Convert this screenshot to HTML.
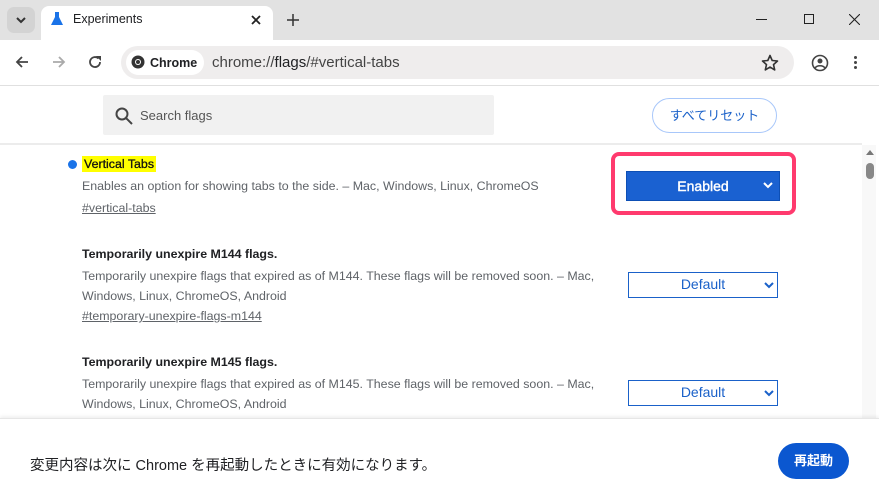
<!DOCTYPE html>
<html><head><meta charset="utf-8"><style>
*{margin:0;padding:0;box-sizing:border-box}
body{width:879px;height:504px;overflow:hidden;background:#fff;font-family:"Liberation Sans","Noto Sans CJK JP",sans-serif;position:relative;color:#202124}
.abs{position:absolute}
.strip{left:0;top:0;width:879px;height:40px;background:#e2e2e2}
.tab{left:41px;top:6px;width:232px;height:34px;background:#fff;border-radius:8px 8px 0 0}
.tb{left:0;top:40px;width:879px;height:46px;background:#fff;border-bottom:1px solid #e0e0e0}
.omni{left:121px;top:46px;width:673px;height:33px;background:#efeded;border-radius:17px}
.chip{left:126px;top:50px;width:78px;height:25px;background:#fff;border-radius:13px}
.search{left:103px;top:95px;width:391px;height:40px;background:#f1f1f1;border-radius:2px}
.sep{left:0;top:143px;width:862px;height:2px;background:#ececec}
.t{font-size:12.4px;color:#5f6368}
.h{font-size:12.4px;font-weight:bold;color:#202124}
.lnk{font-size:12.4px;color:#5f6368;text-decoration:underline}
.sel{border:1.5px solid #1a61c9;color:#1a61c9;font-size:14px;text-align:center;background:#fff}
.foot{left:0;top:418px;width:879px;height:86px;background:#fff;border-top:1px solid #e6e6e6;box-shadow:0 -2px 3px rgba(0,0,0,.06)}
</style></head><body>
<div class="abs strip"></div>
<div class="abs" style="left:7px;top:7px;width:28px;height:26px;background:#d3d3d3;border-radius:7px"></div>
<svg class="abs" style="left:15px;top:15px" width="12" height="10"><path d="M2 3l4 4 4-4" stroke="#333" stroke-width="2" fill="none"/></svg>
<div class="abs tab"></div>
<svg class="abs" style="left:50px;top:11px" width="14" height="16"><path d="M4 1h6M5 1v5L1 14h12L9 6V1" fill="#1a73e8"/></svg>
<div class="abs" style="left:73px;top:12px;font-size:12.5px">Experiments</div>
<svg class="abs" style="left:251px;top:15px" width="10" height="10"><path d="M1 1l8 8M9 1l-8 8" stroke="#222" stroke-width="1.8"/></svg>
<svg class="abs" style="left:287px;top:14px" width="12" height="12"><path d="M6 0v12M0 6h12" stroke="#333" stroke-width="1.5"/></svg>
<div class="abs" style="left:756px;top:19px;width:11px;height:1px;background:#222"></div>
<div class="abs" style="left:804px;top:14px;width:10px;height:10px;border:1px solid #222"></div>
<svg class="abs" style="left:849px;top:14px" width="11" height="11"><path d="M0 0l11 11M11 0L0 11" stroke="#222" stroke-width="1.1"/></svg>
<div class="abs tb"></div>
<svg class="abs" style="left:15px;top:55px" width="14" height="14"><path d="M13 7H2M7 2L2 7l5 5" stroke="#444" stroke-width="1.8" fill="none"/></svg>
<svg class="abs" style="left:52px;top:55px" width="14" height="14"><path d="M1 7h11M7 2l5 5-5 5" stroke="#aaa" stroke-width="1.8" fill="none"/></svg>
<svg class="abs" style="left:88px;top:55px" width="14" height="14"><path d="M12 7A5 5 0 1 1 10.5 3.5" stroke="#444" stroke-width="1.8" fill="none"/><path d="M8 1h5v5z" fill="#444"/></svg>
<div class="abs omni"></div>
<div class="abs chip"></div>
<svg class="abs" style="left:131px;top:55px" width="14" height="14"><circle cx="7" cy="7" r="6.5" fill="#333"/><circle cx="7" cy="7" r="3" fill="#fff"/><circle cx="7" cy="7" r="2" fill="#333"/></svg>
<div class="abs" style="left:150px;top:56px;font-size:12.5px;font-weight:bold">Chrome</div>
<div class="abs" style="left:212px;top:54px;font-size:15px;color:#444">chrome://<span style="color:#202124">flags</span>/#vertical-tabs</div>
<svg class="abs" style="left:761px;top:54px" width="18" height="18"><path d="M9 1.5l2.2 5 5.3.5-4 3.6 1.2 5.3L9 13.1 4.3 15.9l1.2-5.3-4-3.6 5.3-.5z" stroke="#333" stroke-width="1.6" fill="none" stroke-linejoin="round"/></svg>
<svg class="abs" style="left:811px;top:54px" width="18" height="18"><circle cx="9" cy="9" r="7.5" stroke="#444" stroke-width="1.6" fill="none"/><circle cx="9" cy="7" r="2.5" fill="#444"/><path d="M4 14c2-3 8-3 10 0" stroke="#444" stroke-width="1.6" fill="none"/></svg>
<div class="abs" style="left:854px;top:56px;width:3px;height:3px;background:#444;border-radius:50%;box-shadow:0 5px #444,0 10px #444"></div>
<div class="abs search"></div>
<svg class="abs" style="left:114px;top:106px" width="20" height="20"><circle cx="8" cy="8" r="5.5" stroke="#444" stroke-width="2" fill="none"/><path d="M12 12l6 6" stroke="#444" stroke-width="2"/></svg>
<div class="abs" style="left:140px;top:108px;font-size:13px;color:#555">Search flags</div>
<div class="abs" style="left:652px;top:98px;width:125px;height:35px;border:1px solid #a8c7fa;border-radius:18px;color:#1a61c9;font-size:13px;text-align:center;line-height:33px">すべてリセット</div>
<div class="abs sep"></div>
<div class="abs" style="left:862px;top:145px;width:14px;height:273px;background:#f8f8f8"></div>
<div class="abs" style="left:866px;top:150px;width:0;height:0;border-left:4px solid transparent;border-right:4px solid transparent;border-bottom:5px solid #777"></div>
<div class="abs" style="left:866px;top:163px;width:8px;height:16px;background:#888;border-radius:4px"></div>
<div class="abs" style="left:68px;top:160px;width:9px;height:9px;background:#1a73e8;border-radius:50%"></div>
<div class="abs h" style="left:82px;top:156px;background:#ffff00;padding:1px 2px 1px 2px;font-weight:normal;color:#111;-webkit-text-stroke:.3px #111">Vertical Tabs</div>
<div class="abs t" style="left:82px;top:179px">Enables an option for showing tabs to the side. – Mac, Windows, Linux, ChromeOS</div>
<div class="abs lnk" style="left:82px;top:201px">#vertical-tabs</div>
<div class="abs" style="left:611px;top:152px;width:185px;height:63px;border:4px solid #ff3a6e;border-radius:8px"></div>
<div class="abs" style="left:626px;top:171px;width:154px;height:30px;background:#1a61d1;border:1px solid #0d4fb5;color:#fff;font-size:14px;text-align:center;line-height:28px;-webkit-text-stroke:.4px #fff">Enabled</div>
<svg class="abs" style="left:763px;top:182px" width="10" height="7"><path d="M1 1l4 4 4-4" stroke="#fff" stroke-width="2" fill="none"/></svg>
<div class="abs h" style="left:82px;top:247px">Temporarily unexpire M144 flags.</div>
<div class="abs t" style="left:82px;top:266px;width:545px;line-height:20px">Temporarily unexpire flags that expired as of M144. These flags will be removed soon. – Mac, Windows, Linux, ChromeOS, Android</div>
<div class="abs lnk" style="left:82px;top:309px">#temporary-unexpire-flags-m144</div>
<div class="abs sel" style="left:628px;top:272px;width:150px;height:26px;line-height:23px">Default</div>
<svg class="abs" style="left:764px;top:282px" width="10" height="7"><path d="M1 1l4 4 4-4" stroke="#1a61c9" stroke-width="2" fill="none"/></svg>
<div class="abs h" style="left:82px;top:355px">Temporarily unexpire M145 flags.</div>
<div class="abs t" style="left:82px;top:374px;width:545px;line-height:20px">Temporarily unexpire flags that expired as of M145. These flags will be removed soon. – Mac, Windows, Linux, ChromeOS, Android</div>
<div class="abs sel" style="left:628px;top:380px;width:150px;height:26px;line-height:23px">Default</div>
<svg class="abs" style="left:764px;top:390px" width="10" height="7"><path d="M1 1l4 4 4-4" stroke="#1a61c9" stroke-width="2" fill="none"/></svg>
<div class="abs foot"></div>
<div class="abs" style="left:30px;top:454px;font-size:14.5px;color:#202124">変更内容は次に Chrome を再起動したときに有効になります。</div>
<div class="abs" style="left:778px;top:443px;width:71px;height:36px;background:#0b57d0;border-radius:18px;color:#fff;font-size:13px;font-weight:bold;text-align:center;line-height:36px">再起動</div>
</body></html>
